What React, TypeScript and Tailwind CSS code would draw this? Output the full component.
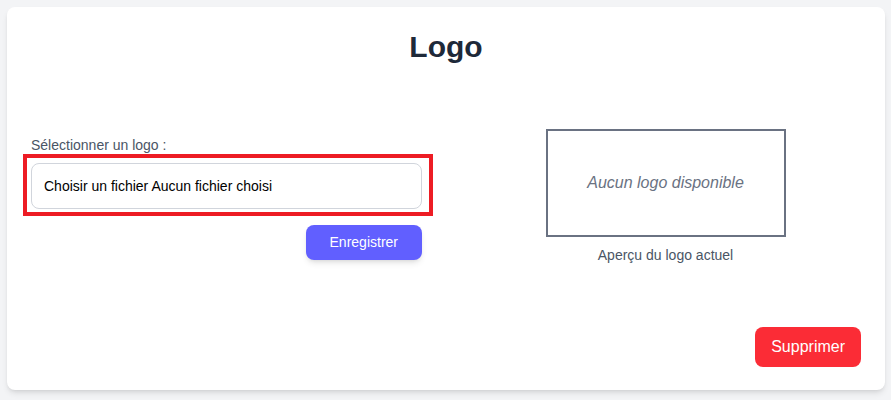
export default function App() {
  return (
    <div className="min-h-[400px] bg-gray-100 p-[7px] pr-[6px] font-['Liberation_Sans',Arial,sans-serif]">
      <div className="flex h-[383px] flex-col rounded-lg bg-white px-6 pt-[22px] pb-[23px] shadow-md">
        {/* Title */}
        <h1 className="text-center text-3xl font-bold text-gray-800">Logo</h1>

        {/* Upload + preview */}
        <div className="mt-16 grid grid-cols-2 items-center gap-12">
          <div>
            <label className="mb-2 block text-sm text-gray-600">Sélectionner un logo :</label>
            <div className="relative">
              <div className="rounded-lg border border-gray-300 px-3 py-3 text-sm text-black">
                Choisir un fichier Aucun fichier choisi
              </div>
              {/* highlight */}
              <div className="pointer-events-none absolute -top-[9px] -left-2 -right-[11px] -bottom-[7px] border-4 border-[#ed1c24]" />
            </div>
            <div className="mt-4 flex justify-end">
              <button className="h-[35px] rounded-lg bg-indigo-500 px-6 text-sm text-white shadow-md">
                Enregistrer
              </button>
            </div>
          </div>

          <div className="flex flex-col items-center">
            <div className="flex h-[108px] w-60 items-center justify-center border-2 border-gray-500">
              <span className="text-base italic text-gray-500">Aucun logo disponible</span>
            </div>
            <p className="mt-2 text-sm text-gray-600">Aperçu du logo actuel</p>
          </div>
        </div>

        <div className="mt-auto flex justify-end">
          <button className="rounded-lg bg-red-500 px-4 py-2 text-base text-white">Supprimer</button>
        </div>
      </div>
    </div>
  )
}
